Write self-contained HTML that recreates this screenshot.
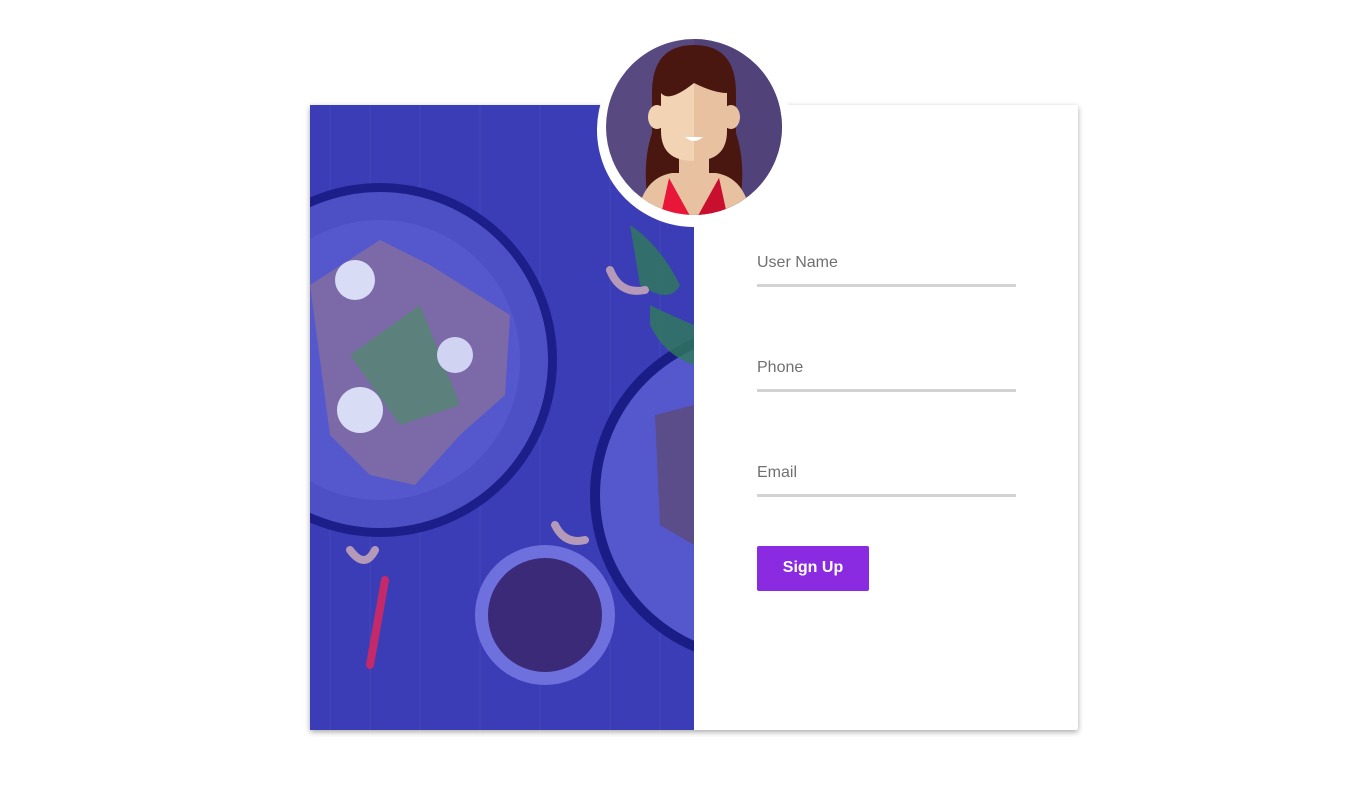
<!DOCTYPE html>
<html><head><style>
body{margin:0;width:1356px;height:793px;background:#fff;position:relative;overflow:hidden;font-family:"Liberation Sans",sans-serif}
.card{position:absolute;left:310px;top:105px;width:768px;height:625px;background:#fff;box-shadow:0 2px 6px rgba(0,0,0,.35);border-radius:2px}
.img{position:absolute;left:310px;top:105px;width:384px;height:625px;overflow:hidden}
.f{position:absolute;left:757px;width:259px}
.f span{display:block;font-size:16px;color:#707070}
.f i{display:block;height:3px;background:#d3d3d3;margin-top:12px}
.btn{position:absolute;left:757px;top:546px;width:112px;height:45px;background:#8a2be2;border-radius:2px;color:#fff;font-weight:bold;font-size:16px;text-align:center;line-height:44px}
</style></head><body>
<div class="card"></div>
<div class="img">
<svg width="384" height="625" viewBox="0 0 384 625">
<rect width="384" height="625" fill="#3b3db6"/>
<g stroke="#4a4cc4" stroke-width="1" opacity=".6">
<path d="M20 0v625M60 0v625M110 0v625M170 0v625M230 0v625M300 0v625M350 0v625"/>
</g>
<circle cx="70" cy="255" r="177" fill="#1c1f8a"/>
<circle cx="70" cy="255" r="168" fill="#4d50c4"/>
<circle cx="70" cy="255" r="140" fill="#5558cc"/>
<path d="M0 180 L70 135 L120 160 L200 210 L195 290 L150 330 L105 380 L60 370 L20 330 Z" fill="#7c6aa8"/>
<path d="M40 250 L110 200 L150 300 L90 320 Z" fill="#4e8a6a" opacity=".7"/>
<circle cx="45" cy="175" r="20" fill="#d8dcf5"/>
<circle cx="145" cy="250" r="18" fill="#d0d4f2"/>
<circle cx="50" cy="305" r="23" fill="#d8dcf5"/>
<circle cx="450" cy="390" r="170" fill="#1a1d86"/>
<circle cx="450" cy="390" r="160" fill="#5558cc"/>
<path d="M345 310 L384 300 L384 440 L350 420 Z" fill="#5a4d8a"/>
<circle cx="235" cy="510" r="70" fill="#6d70dd"/>
<circle cx="235" cy="510" r="57" fill="#3a2a78"/>
<path d="M60 560 L75 475" stroke="#c42a6a" stroke-width="8" stroke-linecap="round"/>
<path d="M320 120 q30 20 50 60 q-10 20 -40 0 Z M340 200 q20 10 44 20 L384 260 q-30 -10 -44 -40Z" fill="#2f7a5a" opacity=".8"/>
<path d="M300 165 q10 25 35 20 M40 445 q15 20 25 0 M245 420 q10 20 30 15" stroke="#b49ab8" stroke-width="8" fill="none" stroke-linecap="round"/>
</svg>
</div>
<svg style="position:absolute;left:597px;top:33px" width="194" height="197" viewBox="0 0 194 197">
<circle cx="97" cy="97" r="97" fill="#fff"/>
<clipPath id="c"><circle cx="97" cy="94" r="88"/></clipPath>
<g clip-path="url(#c)">
<rect width="194" height="194" fill="#584a80"/>
<path d="M97 94 L97 0 L194 0 L194 194 L97 194Z" fill="#52427a"/>
<path d="M55 60 q0-48 42-48 q42 0 42 48 l0 40 q10 30 4 70 l-92 0 q-6-40 4-70z" fill="#4a1710"/>
<rect x="82" y="105" width="30" height="40" fill="#e8c2a0"/>
<path d="M40 185 q5-40 35-45 l44 0 q30 5 35 45z" fill="#e8c2a0"/>
<path d="M60 200 l12-55 l25 45 l25-45 l12 55z" fill="#e8173a"/>
<path d="M97 190 l25-45 l12 55 l-37 0z" fill="#c8102e"/>
<ellipse cx="60" cy="84" rx="9" ry="12" fill="#f2d3b4"/><ellipse cx="134" cy="84" rx="9" ry="12" fill="#e8c2a0"/>
<path d="M64 60 q8 10 33-10 L97 128 q-33 0 -33-30z" fill="#f2d3b4"/>
<path d="M97 50 q20 10 33 10 L130 98 q0 30 -33 30z" fill="#e8c2a0"/>
<path d="M88 104 q9 8 18 0z" fill="#fff"/>
</g>
</svg>
<div class="f" style="top:254px"><span>User Name</span><i></i></div>
<div class="f" style="top:359px"><span>Phone</span><i></i></div>
<div class="f" style="top:464px"><span>Email</span><i></i></div>
<div class="btn">Sign Up</div>
</body></html>
